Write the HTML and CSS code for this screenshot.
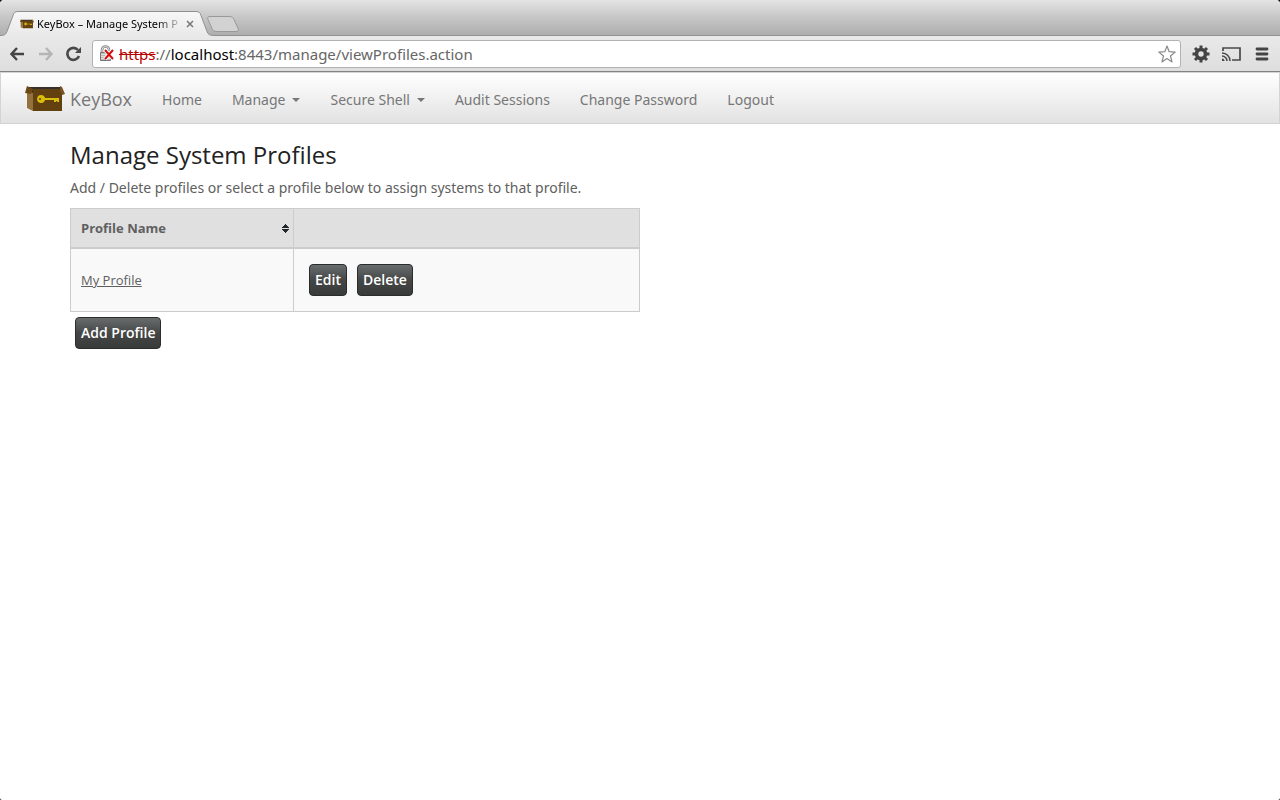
FILE: index.html
```html
<!DOCTYPE html>
<html lang="en">
<head>
<meta charset="utf-8">
<title>KeyBox - Manage System Profiles</title>
<link rel="stylesheet" href="styles.css">
</head>
<body>
<svg class="defs" aria-hidden="true">
  <symbol id="box" viewBox="0 0 40 26">
    <path d="M3 1h32v6H3z" fill="#35302b"/>
    <path d="M2 4 8 7v18l-6-3z" fill="#94703c"/>
    <path d="M8 3h29v22H8z" fill="#62400f"/>
    <path d="M2 0 8 3 6 8 0 7z" fill="#6d4714"/>
    <path d="m35 0 2 1 3 7-3 1-2-5z" fill="#795321"/>
    <path d="M16 9a4 4 0 0 1 4 3h14v4h-2v-1h-1v1h-2v-2h-9a4 4 0 1 1-4-5zm-1 3a1 1 0 1 0 .1 2 1 1 0 0 0-.1-2z" fill="#d8bd09"/>
  </symbol>
</svg>
<header class="browser">
  <div class="tabstrip">
    <svg class="tabshape" viewBox="0 0 246 36" aria-hidden="true">
      <defs><linearGradient id="tabfill" x2="0" y2="1"><stop stop-color="#f7f7f7"/><stop offset="1" stop-color="#e9e9e9"/></linearGradient></defs>
      <path d="M0 36V35.500c4 0 6-1 7-4l6-16c1-3 2-4 5-4h178c3 0 4 1 5 4l6 16c1 3 3 4 7 4v.5z" fill="url(#tabfill)"/>
      <path d="M0 35.500c4 0 6-1 7-4l6-16c1-3 2-4 5-4h178c3 0 4 1 5 4l6 16c1 3 3 4 7 4h32" fill="none" stroke="#909090"/>
      <path d="M210 16.500h19c3 0 4 1 5 3l4 9c1 2 0 3-2 3h-19c-3 0-4-1-5-3l-4-9c-1-2 0-3 2-3z" fill="#d2d2d2" stroke="#999"/>
    </svg>
    <div class="tab">
      <svg class="favicon" aria-hidden="true"><use href="#box"/></svg>
      <span class="tabtitle">KeyBox – Manage System P</span>
      <button class="close" aria-label="Close tab"><svg width="8" height="8" viewBox="0 0 8 8"><path d="m1 1 6 6M7 1 1 7" stroke="#777" stroke-width="1.500"/></svg></button>
    </div>
  </div>
  <div class="toolbar">
    <button class="tool" aria-label="Back"><svg width="16" height="16" viewBox="0 0 16 16"><path d="M14 8H2M7 2 1.500 8 7 14" fill="none" stroke="#444" stroke-width="2.400"/></svg></button>
    <button class="tool" aria-label="Forward"><svg width="16" height="16" viewBox="0 0 16 16"><path d="M1 8h12M8 2l5.500 6L8 14" fill="none" stroke="#b5b5b5" stroke-width="2.400"/></svg></button>
    <button class="tool" aria-label="Reload"><svg width="16" height="16" viewBox="0 0 16 16"><path d="M12 4A6 6 0 1 0 13 10" fill="none" stroke="#494949" stroke-width="2.600"/><path d="M15 1v6H9z" fill="#494949"/></svg></button>
    <div class="address">
      <svg width="16" height="17" viewBox="0 0 16 17" aria-hidden="true"><path d="M3 8V5a3.500 3.500 0 0 1 7 0v3" fill="none" stroke="#888" stroke-width="2.600"/><path d="M3 8V5a3.500 3.500 0 0 1 7 0v3" fill="none" stroke="#ddd"/><path d="M1.500 7.500h10v8h-10z" fill="#bbb" stroke="#777"/><path d="M2 9.500h9M2 11.500h9M2 13.500h9" stroke="#e0e0e0"/><path d="m6 5 8 9M14 5l-8 9" stroke="#fff" stroke-width="4"/><path d="m6 5 8 9M14 5l-8 9" stroke="#d10d0d" stroke-width="2"/></svg>
      <span class="url"><s>https</s>://<b>localhost</b>:8443/manage/viewProfiles.action</span>
      <button class="tool star" aria-label="Bookmark"><svg width="18" height="18" viewBox="0 0 18 18"><path d="m9 1 2.200 5.700 6 .4-4.700 3.900 1.500 5.900L9 13.600l-5 3.300L5.500 11 .8 7.100l6-.4z" fill="#fff" stroke="#8a8a8a" stroke-width="1.200" stroke-linejoin="round"/></svg></button>
    </div>
    <button class="tool" aria-label="Settings"><svg width="18" height="18" viewBox="0 0 18 18"><circle cx="9" cy="9" r="4.500" fill="none" stroke="#444" stroke-width="3.600"/><path d="M9 .5v4M9 13.500v4M.5 9h4M13.500 9h4M3 3l2.500 2.500M12.500 12.500 15 15M3 15l2.500-2.500M12.500 5.500 15 3" stroke="#444" stroke-width="3"/></svg></button>
    <button class="tool cast" aria-label="Cast"><svg width="20" height="16" viewBox="0 0 20 16"><path d="M1 5V2h17v12h-8" fill="none" stroke="#494949" stroke-width="1.700"/><path d="M0 7a8 8 0 0 1 8 8M0 10a5 5 0 0 1 5 5" fill="none" stroke="#494949" stroke-width="1.500"/><path d="M0 12.500A2.500 2.500 0 0 1 2.500 15H0z" fill="#494949"/></svg></button>
    <button class="tool" aria-label="Menu"><svg width="14" height="14" viewBox="0 0 14 14"><path d="M2 2h10M2 7h10M2 12h10" stroke="#444" stroke-width="2.800" stroke-linecap="round"/></svg></button>
  </div>
</header>
<nav class="navbar">
  <a class="brand" href="#"><svg class="logo" aria-hidden="true"><use href="#box"/></svg>KeyBox</a>
  <a href="#">Home</a>
  <a href="#">Manage<i class="caret"></i></a>
  <a href="#">Secure Shell<i class="caret"></i></a>
  <a href="#">Audit Sessions</a>
  <a href="#">Change Password</a>
  <a href="#">Logout</a>
</nav>
<main class="container">
  <h1>Manage System Profiles</h1>
  <p>Add / Delete profiles or select a profile below to assign systems to that profile.</p>
  <table class="profiles">
    <thead>
      <tr>
        <th class="name"><div class="sortable">Profile Name<svg width="7" height="9" viewBox="0 0 7 9" shape-rendering="crispEdges" aria-hidden="true"><path d="M3 0h1v1h1v1h1v1h1v1H0V3h1V2h1V1h1zM0 5h7v1H6v1H5v1H4v1H3V8H2V7H1V6H0z" fill="#23292b"/></svg></div></th>
        <th></th>
      </tr>
    </thead>
    <tbody>
      <tr>
        <td><a href="#">My Profile</a></td>
        <td><div class="actions"><button class="btn">Edit</button><button class="btn">Delete</button></div></td>
      </tr>
    </tbody>
  </table>
  <button class="btn add">Add Profile</button>
</main>
</body>
</html>
```
FILE: styles.css
```css
* {
  box-sizing: border-box;
}

html {
  background: #111;
}

body {
  min-height: 100vh;
  margin: 0;
  background: #fff;
  border-radius: 4px 4px 2px 2px;
  color: #606060;
  font: 14px/20px "Noto Sans", sans-serif;
}

button {
  font: inherit;
}

.defs {
  position: absolute;
  width: 0;
  height: 0;
}

.tabstrip {
  display: grid;
  height: 36px;
  background: linear-gradient(#e4e4e4, #c5c5c5 50%, #adadad);
  border-radius: 4px 4px 0 0;
  box-shadow: inset 0 -1px #929292;
}

.tabshape,
.tab {
  grid-area: 1 / 1;
}

.tabshape {
  width: 246px;
  height: 36px;
}

.tab {
  display: flex;
  align-items: center;
  width: 200px;
  padding: 12px 4px 0 20px;
  color: #000;
  font: 11px/16px "Noto Sans", sans-serif;
}

.favicon {
  flex: none;
  width: 14px;
  height: 12px;
  margin-right: 3px;
}

.tabtitle {
  flex: 1;
  white-space: nowrap;
  mask-image: linear-gradient(90deg, #000 85%, transparent 105%);
}

.close,
.tool {
  display: flex;
  flex: none;
  padding: 0;
  border: 0;
  background: none;
}

.close {
  margin: 0 2px 0 8px;
}

.toolbar {
  display: flex;
  align-items: center;
  gap: 12px;
  height: 36px;
  padding: 0 11px 0 10px;
  background: linear-gradient(#e9e9e9, #dedede);
  border-bottom: 1px solid #828282;
}

.cast {
  margin-right: 1px;
}

.address {
  display: flex;
  flex: 1;
  align-items: center;
  height: 28px;
  margin: 0 -1px 0 -2px;
  padding: 0 4px 0 6px;
  background: #fff;
  border: 1px solid #b2b2b2;
  border-radius: 3px;
}

.url {
  flex: 1;
  margin-left: 4px;
  color: #666;
  font: 15px/20px "Noto Sans", sans-serif;
}

.url s {
  color: #b80000;
}

.url b {
  color: #000;
  font-weight: 400;
}

.navbar {
  display: flex;
  align-items: center;
  gap: 30px;
  height: 52px;
  padding: 3px 24px 0;
  background: linear-gradient(#fff, #e2e2e2);
  border: 1px solid #d4d4d4;
}

.navbar a {
  display: flex;
  align-items: center;
  color: #777;
  text-decoration: none;
}

.navbar .brand {
  gap: 5px;
  padding-bottom: 2px;
  font-family: "Open Sans", sans-serif;
  font-size: 18px;
}

.logo {
  width: 40px;
  height: 26px;
}

.caret {
  margin-left: 7px;
  border: 4px solid transparent;
  border-top-color: #777;
  border-bottom: 0;
}

.container {
  max-width: 1170px;
  margin: 0 auto;
  padding: 18px 15px;
}

h1 {
  margin: 0 0 10px;
  color: #222;
  font: 24px/26px "Open Sans", sans-serif;
}

p {
  margin: 0 0 10px;
}

.profiles {
  width: 50%;
  border-collapse: collapse;
  background: #f9f9f9;
  font: 13px/20px "Open Sans", sans-serif;
}

.profiles th,
.profiles td {
  padding: 10px;
  border: 1px solid #ccc;
  text-align: left;
}

.profiles th {
  padding: 9px 4px 9px 10px;
  background: #e0e0e0;
  border-bottom-width: 2px;
}

.name {
  width: 39.2%;
}

.sortable {
  display: flex;
  align-items: center;
  justify-content: space-between;
}

.profiles a {
  color: #606060;
}

.actions {
  display: flex;
  gap: 10px;
  padding: 5px;
}

.btn {
  padding: 5px;
  color: #fff;
  background: linear-gradient(#6a6d6e, #444746 50%, #393b3a);
  border: 1px solid #2b2d2d;
  border-radius: 4px;
  font: 600 14px/20px "Open Sans", sans-serif;
}

.add {
  margin: 5px;
}
```
